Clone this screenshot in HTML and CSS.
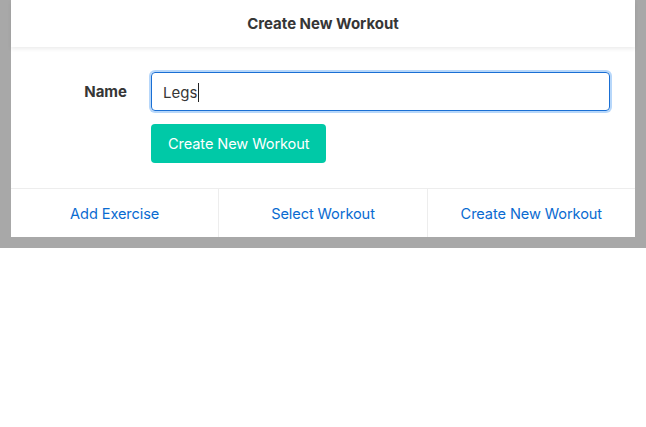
FILE: index.html
```html
<!DOCTYPE html>
<html>
<head>
<meta charset="utf-8">
<link rel="stylesheet" href="styles.css">
</head>
<body>
<div class="backdrop">
  <div class="card">
    <header class="card-header">Create New Workout</header>
    <section class="card-body">
      <div class="field">
        <label class="label">Name</label>
        <div class="controls">
          <div class="input">Legs<span class="caret"></span></div>
          <button class="button">Create New Workout</button>
        </div>
      </div>
    </section>
    <footer class="card-footer">
      <a class="footer-item">Add Exercise</a>
      <a class="footer-item">Select Workout</a>
      <a class="footer-item">Create New Workout</a>
    </footer>
  </div>
</div>
</body>
</html>
```
FILE: styles.css
```css
html, body {
  margin: 0;
  padding: 0;
  background: #fff;
  font-family: Inter, "Noto Sans", sans-serif;
  color: #363636;
}
.backdrop {
  background: #a8a8a8;
  height: 248px;
  padding: 0 11px;
  box-shadow: 0 4px 8px rgba(0,0,0,0.06);
}
.card {
  background: #fff;
  height: 237px;
  display: flex;
  flex-direction: column;
}
.card-header {
  height: 47px;
  display: flex;
  align-items: center;
  justify-content: center;
  font-weight: 700;
  font-size: 15px;
  color: #363636;
  box-shadow: 0 2px 4px rgba(10,10,10,0.08);
}
.card-body {
  flex: 1;
  padding-top: 25px;
}
.field {
  display: flex;
}
.label {
  width: 116px;
  text-align: right;
  font-weight: 700;
  font-size: 15px;
  padding-top: 10px;
  margin-right: 24px;
}
.controls {
  display: flex;
  flex-direction: column;
  align-items: flex-start;
  gap: 13px;
}
.input {
  box-sizing: border-box;
  width: 459px;
  height: 39px;
  border: 1px solid #1a6fd4;
  border-radius: 4px;
  box-shadow: 0 0 0 2px rgba(50,140,240,0.35);
  padding: 1px 11px 0;
  font-size: 15px;
  line-height: 37px;
  color: #363636;
  display: flex;
  align-items: center;
}
.caret {
  display: inline-block;
  width: 1px;
  height: 19px;
  background: #222;
  margin-left: 1px;
}
.button {
  height: 39px;
  padding: 1px 17px 0;
  border: none;
  border-radius: 4px;
  background: #00c9a7;
  color: #fff;
  font-family: inherit;
  font-size: 14.6px;
  letter-spacing: -0.1px;
}
.card-footer {
  height: 48px;
  border-top: 1px solid #ededed;
  display: flex;
}
.footer-item {
  flex: 1;
  display: flex;
  align-items: center;
  justify-content: center;
  padding-top: 1px;
  color: #0a6bd1;
  font-size: 14.6px;
  letter-spacing: -0.1px;
  border-left: 1px solid #ededed;
}
.footer-item:first-child {
  border-left: none;
}
```
